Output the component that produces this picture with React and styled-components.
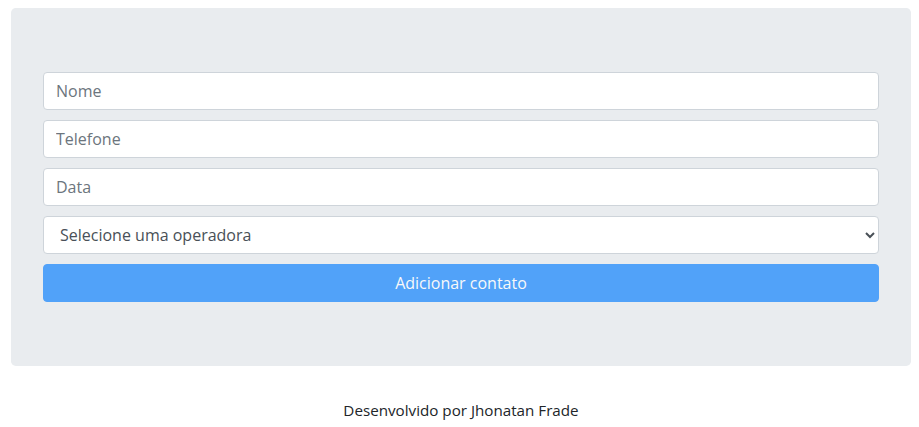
import React from 'react'
import styled, { createGlobalStyle } from 'styled-components'

const Global = createGlobalStyle`
  body{
    margin:0;
    font-family:"Open Sans","Noto Sans",sans-serif;
    font-size:16px;
    color:#212529;
    background:#fff;
  }
  *{box-sizing:border-box;}
`;

export default function App() {
  return (
    <Page>
      <Global />
      <Jumbotron>
        <Form onSubmit={(e)=>e.preventDefault()}>
          <Input placeholder='Nome' />
          <Input placeholder='Telefone' />
          <Input placeholder='Data' />
          <Select defaultValue=''>
            <option value=''>Selecione uma operadora</option>
            <option value='vivo'>Vivo</option>
            <option value='claro'>Claro</option>
            <option value='tim'>Tim</option>
          </Select>
          <Button disabled>Adicionar contato</Button>
        </Form>
      </Jumbotron>
      <Footer>Desenvolvido por Jhonatan Frade</Footer>
    </Page>
  )
}

const Page=styled.div`
  padding:8px 8px 0 11px;
`;
const Jumbotron=styled.div`
  background:#e9ecef;
  border-radius:4.8px;
  padding:64px 32px;
  margin-bottom:32px;
`;
const Form=styled.form`
  display:flex;
  flex-direction:column;
  gap:10px;
`;
const Input=styled.input`
  height:38px;
  width:100%;
  padding:6px 12px;
  font-family:inherit;
  font-size:16px;
  color:#495057;
  background:#fff;
  border:1px solid #ced4da;
  border-radius:4px;
  outline:none;
  &::placeholder{color:#6c757d;}
`;
const Select=styled.select`
  height:38px;
  width:100%;
  padding:6px 12px;
  font-family:inherit;
  font-size:16px;
  color:#495057;
  background:#fff;
  border:1px solid #ced4da;
  border-radius:4px;
  outline:none;
`;
const Button=styled.button`
  height:38px;
  width:100%;
  font-family:inherit;
  font-size:16px;
  color:#fff;
  background:#007bff;
  border:1px solid #007bff;
  border-radius:4px;
  opacity:.65;
`;
const Footer=styled.p`
  margin:0;
  text-align:center;
  line-height:24px;
  font-size:15.2px;
`;
